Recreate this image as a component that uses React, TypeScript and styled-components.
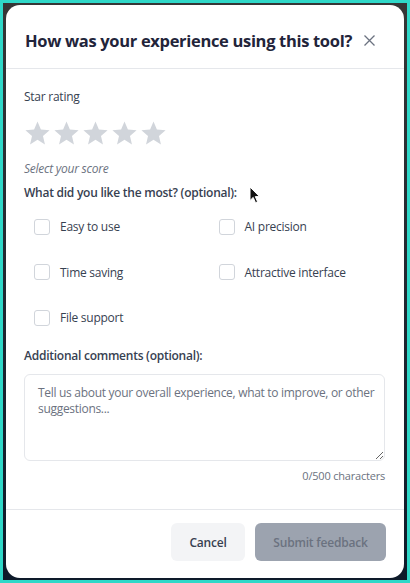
import React from "react";
import styled, { createGlobalStyle } from "styled-components";

const Global = createGlobalStyle`
  html, body { margin: 0; padding: 0; }
  body { font-family: "Open Sans", "Noto Sans", sans-serif; background: #2fd8c8; }
  * { box-sizing: border-box; }
`;

const Frame = styled.div`
  position: relative;
  width: 410px;
  height: 583px;
  border: 3px solid #2fd8c8;
  padding: 2px 3px;
  background: linear-gradient(180deg, #363636 0%, #1d2430 60%, #0e1a2a 100%);
`;

const Modal = styled.div`
  height: 100%;
  background: #ffffff;
  border-radius: 14px;
  display: flex;
  flex-direction: column;
  overflow: hidden;
`;

const Header = styled.div`
  height: 64px;
  flex: none;
  display: flex;
  align-items: center;
  gap: 8px;
  padding: 8px 27px 0 19px;
  border-bottom: 1px solid #e5e7eb;
`;

const Title = styled.h2`
  margin: 0;
  flex: 1;
  white-space: nowrap;
  font-size: 16.5px;
  font-weight: 700;
  color: #22243a;
  letter-spacing: -0.32px;
`;

const CloseButton = styled.button`
  border: 0;
  background: none;
  padding: 0;
  width: 16px;
  height: 16px;
  display: flex;
  align-items: center;
  justify-content: center;
  color: #6b7280;
`;

const Body = styled.div`
  flex: 1;
  display: flex;
  flex-direction: column;
  padding: 19px 19px 0 18px;
`;

const Label = styled.div<{ $weight?: number }>`
  font-size: 12px;
  line-height: 18px;
  letter-spacing: -0.25px;
  font-weight: ${(p) => p.$weight ?? 400};
  color: #374151;
`;

const Stars = styled.div`
  display: flex;
  margin-top: 13px;
  margin-left: -1px;
`;

const Star = styled.svg`
  width: 29px;
  height: 29px;
  display: block;
  fill: #d1d5db;
`;

const Hint = styled.div`
  font-size: 12px;
  line-height: 18px;
  letter-spacing: -0.25px;
  font-style: italic;
  color: #6b7280;
  margin-top: 12px;
`;

const Section = styled.div`
  margin-top: 6px;
`;

const Options = styled.div`
  display: grid;
  grid-template-columns: 1fr 1fr;
  column-gap: 8px;
  margin-top: 2px;
`;

const Option = styled.label`
  display: flex;
  align-items: center;
  gap: 10px;
  height: 45.5px;
  padding: 0 10px;
  font-size: 12px;
  letter-spacing: -0.25px;
  color: #374151;
`;

const Box = styled.span`
  width: 16px;
  height: 16px;
  border: 1px solid #d1d5db;
  border-radius: 3px;
  background: #fff;
  flex: none;
`;

const CommentsLabel = styled(Label)`
  margin-top: 6px;
`;

const TextArea = styled.textarea`
  margin-top: 9px;
  height: 87px;
  width: 100%;
  border: 1px solid #e5e7eb;
  border-radius: 6px;
  padding: 10px 6px 10px 13px;
  font-family: "Open Sans", "Noto Sans", sans-serif;
  font-size: 12px;
  line-height: 16px;
  letter-spacing: -0.3px;
  color: #374151;
  resize: vertical;
  outline: none;
  &::placeholder { color: #6b7280; }
`;

const Counter = styled.div`
  text-align: right;
  font-size: 11px;
  line-height: 16px;
  letter-spacing: -0.2px;
  color: #6b7280;
  margin-top: 7px;
`;

const Footer = styled.div`
  flex: none;
  display: flex;
  justify-content: flex-end;
  gap: 10px;
  padding: 13px 18px 17px;
  border-top: 1px solid #e5e7eb;
`;

const Button = styled.button<{ $primary?: boolean }>`
  height: 38px;
  border: 0;
  border-radius: 6px;
  font-family: "Open Sans", "Noto Sans", sans-serif;
  font-size: 12px;
  font-weight: 600;
  letter-spacing: -0.2px;
  white-space: nowrap;
  padding: 0;
  background: ${(p) => (p.$primary ? "#9ca3af" : "#f3f4f6")};
  color: ${(p) => (p.$primary ? "#6b7280" : "#374151")};
  width: ${(p) => (p.$primary ? 131 : 74)}px;
`;

const Cursor = styled.svg`
  position: absolute;
  left: 246px;
  top: 183px;
  width: 12px;
  height: 18px;
`;

const starPath =
  "M12 17.27L18.18 21l-1.64-7.03L22 9.24l-7.19-.61L12 2 9.19 8.63 2 9.24l5.46 4.73L5.82 21z";

const options = [
  "Easy to use",
  "AI precision",
  "Time saving",
  "Attractive interface",
  "File support",
];

export default function App() {
  return (
    <>
      <Global />
      <Frame>
        <Modal>
          <Header>
            <Title>How was your experience using this tool?</Title>
            <CloseButton aria-label="Close">
              <svg width="11" height="11" viewBox="0 0 11 11" fill="none" stroke="currentColor" strokeWidth="1.3">
                <path d="M0.5 0.5l10 10M10.5 0.5l-10 10" />
              </svg>
            </CloseButton>
          </Header>
          <Body>
            <Label>Star rating</Label>
            <Stars>
              {[0, 1, 2, 3, 4].map((i) => (
                <Star key={i} viewBox="0 0 24 24">
                  <path d={starPath} />
                </Star>
              ))}
            </Stars>
            <Hint>Select your score</Hint>
            <Section>
              <Label $weight={600}>What did you like the most? (optional):</Label>
              <Options>
                {options.map((o) => (
                  <Option key={o}>
                    <Box />
                    {o}
                  </Option>
                ))}
              </Options>
            </Section>
            <CommentsLabel $weight={600}>Additional comments (optional):</CommentsLabel>
            <TextArea placeholder="Tell us about your overall experience, what to improve, or other suggestions..." />
            <Counter>0/500 characters</Counter>
          </Body>
          <Footer>
            <Button>Cancel</Button>
            <Button $primary>Submit feedback</Button>
          </Footer>
        </Modal>
        <Cursor viewBox="0 0 12 18">
          <path d="M1 1v13.5l3.2-3.1 2.3 5.3 2.1-.9-2.3-5.2H10.5z" fill="#111" stroke="#fff" strokeWidth="1" />
        </Cursor>
      </Frame>
    </>
  );
}
